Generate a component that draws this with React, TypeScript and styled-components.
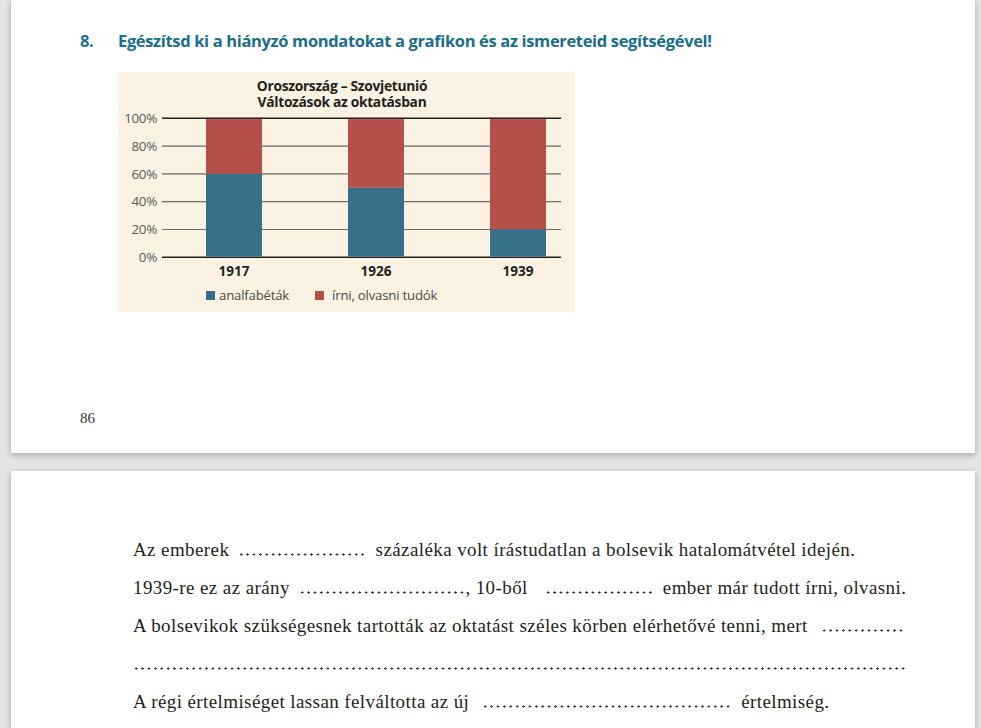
import React from 'react';
import styled, { createGlobalStyle } from 'styled-components';

const GlobalStyle = createGlobalStyle`
  html, body {
    margin: 0;
    padding: 0;
    background: #e4e4e4;
    overflow: hidden;
  }
`;

const Viewer = styled.div`
  display: flex;
  flex-direction: column;
  gap: 18px;
  padding: 0 6px 0 11px;
  height: 728px;
  overflow: hidden;
`;

const Page = styled.div<{ $h: number }>`
  background: #fff;
  height: ${(p) => p.$h}px;
  flex-shrink: 0;
  box-shadow: 0 2px 6px rgba(0, 0, 0, 0.28);
`;

const TopPage = styled(Page)`
  padding: 29px 0 0 69px;
  box-sizing: border-box;
`;

const BottomPage = styled(Page)`
  padding: 60px 0 0 122px;
  box-sizing: border-box;
`;

const Heading = styled.h2`
  display: flex;
  margin: 0;
  font-family: 'Open Sans', 'Noto Sans', sans-serif;
  font-size: 16.5px;
  font-weight: 700;
  line-height: 24px;
  color: #1b6e8c;
  letter-spacing: -0.35px;
`;

const Number = styled.span`
  width: 38px;
  flex-shrink: 0;
`;

const ChartBox = styled.div`
  width: 457px;
  margin: 19px 0 0 38px;
  padding: 6px 0 9px;
  background: #fbf2e3;
  font-family: 'Open Sans', 'Noto Sans', sans-serif;
`;

const ChartTitle = styled.div`
  padding-right: 9px;
  text-align: center;
  font-size: 13.8px;
  font-weight: 700;
  line-height: 16px;
  color: #231f20;
  letter-spacing: -0.3px;
`;

const Plot = styled.svg`
  display: block;
  overflow: visible;
`;

const Legend = styled.div`
  display: flex;
  gap: 26px;
  margin-top: 6px;
  padding-left: 88px;
  font-size: 13.2px;
  line-height: 16px;
  color: #4a4a4a;
  letter-spacing: -0.2px;
`;

const LegendItem = styled.span`
  display: flex;
  align-items: center;
  gap: 4px;
`;

const Swatch = styled.i<{ $c: string; $gap?: number }>`
  width: 9px;
  height: 9px;
  background: ${(p) => p.$c};
  margin-right: ${(p) => p.$gap ?? 0}px;
`;

const PageNumber = styled.div`
  margin-top: 96px;
  font-family: 'Liberation Serif', 'Times New Roman', serif;
  font-size: 15px;
  line-height: 20px;
  color: #333;
`;

const Line = styled.p`
  margin: 0;
  white-space: nowrap;
  font-family: 'Liberation Serif', 'Times New Roman', serif;
  font-size: 19px;
  line-height: 38px;
  color: #231f20;
  letter-spacing: 0.4px;
`;

const DOT = 6.4;

// dotted answer line; $n = number of dots
const Blank = styled.span<{ $n: number; $left?: number; $right?: number }>`
  display: inline-block;
  width: ${(p) => p.$n * DOT}px;
  height: 3px;
  margin: 0 ${(p) => p.$right ?? 4}px 0 ${(p) => p.$left ?? 4}px;
  background-image: radial-gradient(circle, #2a2a2a 0.9px, transparent 1.3px);
  background-size: ${DOT}px 3px;
  background-repeat: repeat-x;
  background-position: 0 0;
`;

const bars = [
  { year: '1917', blue: 60 },
  { year: '1926', blue: 50 },
  { year: '1939', blue: 20 },
];

const BLUE = '#376f89';
const RED = '#b44f4a';
const TOP = 8.3;
const STEP = 27.8;

const EducationChart: React.FC = () => (
  <ChartBox>
    <ChartTitle>
      Oroszország – Szovjetunió
      <br />
      Változások az oktatásban
    </ChartTitle>
    <Plot width={457} height={171} viewBox="0 0 457 171">
      {[100, 80, 60, 40, 20, 0].map((v, i) => {
        const y = TOP + i * STEP;
        const edge = v === 100 || v === 0;
        return (
          <g key={v}>
            <line
              x1={44}
              x2={443}
              y1={y}
              y2={y}
              stroke={edge ? '#231f20' : '#6b6b6b'}
              strokeWidth={edge ? 1.6 : 1.2}
            />
            <text
              x={39}
              y={y + 4.6}
              textAnchor="end"
              fontSize={13.4}
              fill="#5a5a5a"
              fontFamily="'Open Sans', sans-serif"
              letterSpacing="-0.3"
            >
              {v}%
            </text>
          </g>
        );
      })}
      {bars.map((b, i) => {
        const x = 88 + i * 142;
        const bottom = TOP + 5 * STEP;
        const blueH = (b.blue / 100) * 5 * STEP;
        return (
          <g key={b.year}>
            <rect x={x} y={TOP + 0.8} width={56} height={bottom - TOP - blueH - 0.8} fill={RED} />
            <rect x={x} y={bottom - blueH} width={56} height={blueH - 0.8} fill={BLUE} />
            <text
              x={x + 28}
              y={166}
              textAnchor="middle"
              fontSize={13.6}
              fontWeight={700}
              fill="#231f20"
              fontFamily="'Open Sans', sans-serif"
            >
              {b.year}
            </text>
          </g>
        );
      })}
    </Plot>
    <Legend>
      <LegendItem>
        <Swatch $c={BLUE} />
        analfabéták
      </LegendItem>
      <LegendItem>
        <Swatch $c={RED} $gap={4} />
        írni, olvasni tudók
      </LegendItem>
    </Legend>
  </ChartBox>
);

export default function App() {
  return (
    <>
      <GlobalStyle />
      <Viewer>
        <TopPage $h={453}>
          <Heading>
            <Number>8.</Number>
            Egészítsd ki a hiányzó mondatokat a grafikon és az ismereteid segítségével!
          </Heading>
          <EducationChart />
          <PageNumber>86</PageNumber>
        </TopPage>
        <BottomPage $h={257}>
          <Line>
            Az emberek <Blank $n={20} /> százaléka volt írástudatlan a bolsevik hatalomátvétel idején.
          </Line>
          <Line>
            1939-re ez az arány <Blank $n={26} $right={0} />, 10-ből <Blank $n={17} $left={12} /> ember már
            tudott írni, olvasni.
          </Line>
          <Line>
            A bolsevikok szükségesnek tartották az oktatást széles körben elérhetővé tenni, mert{' '}
            <Blank $n={13} $left={8} />
          </Line>
          <Line>
            <Blank $n={121} $left={0} />
          </Line>
          <Line>
            A régi értelmiséget lassan felváltotta az új <Blank $n={39} $left={8} /> értelmiség.
          </Line>
        </BottomPage>
      </Viewer>
    </>
  );
}
